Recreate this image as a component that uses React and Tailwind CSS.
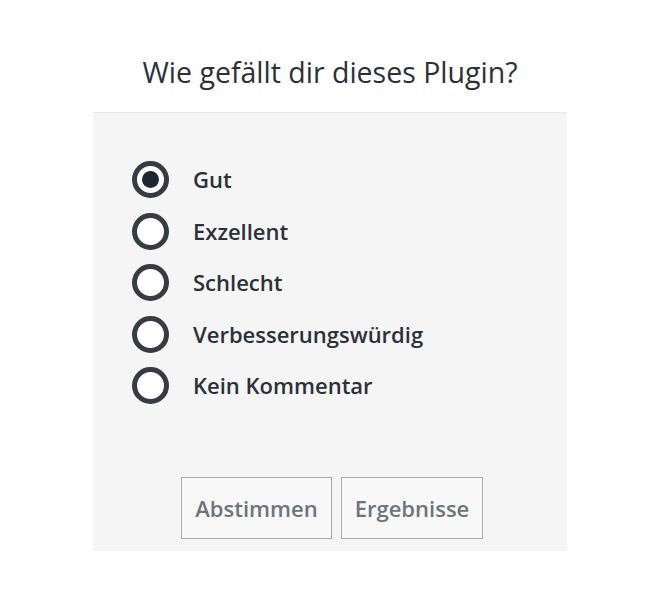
import React from "react";

const options = ["Gut", "Exzellent", "Schlecht", "Verbesserungswürdig", "Kein Kommentar"];

export default function App() {
  return (
    <div className="min-h-[592px] bg-white" style={{ fontFamily: '"Open Sans", "Noto Sans", sans-serif' }}>
      <div className="mx-auto w-[474px] pt-[53px]">
        <h1 className="h-[59px] text-center text-[28.5px] leading-[39px] font-normal text-[#2b313a]">
          Wie gefällt dir dieses Plugin?
        </h1>
        <div className="border-t border-[#e8e8e8] bg-[#f5f5f5] pt-[48px] pb-[12px]">
          <div className="flex flex-col gap-[14.5px] pl-[39px]">
            {options.map((o, i) => (
              <label key={o} className="flex h-[37px] items-center gap-[24px]">
                <span className="flex h-[37px] w-[37px] items-center justify-center rounded-full border-[5px] border-[#363b44] bg-white">
                  {i === 0 && <span className="h-[17px] w-[17px] rounded-full bg-[#1f2633]" />}
                </span>
                <span className="text-[22px] font-semibold text-[#2b313a]">{o}</span>
              </label>
            ))}
          </div>
          <div className="mt-[73px] flex justify-center gap-[9px] pl-[4px]">
            <button className="h-[62px] w-[151px] border border-[#a9a9a9] bg-[#f8f8f8] text-[22px] font-semibold text-[#6c757d]">
              Abstimmen
            </button>
            <button className="h-[62px] w-[142px] border border-[#a9a9a9] bg-[#f8f8f8] text-[22px] font-semibold text-[#6c757d]">
              Ergebnisse
            </button>
          </div>
        </div>
      </div>
    </div>
  );
}
